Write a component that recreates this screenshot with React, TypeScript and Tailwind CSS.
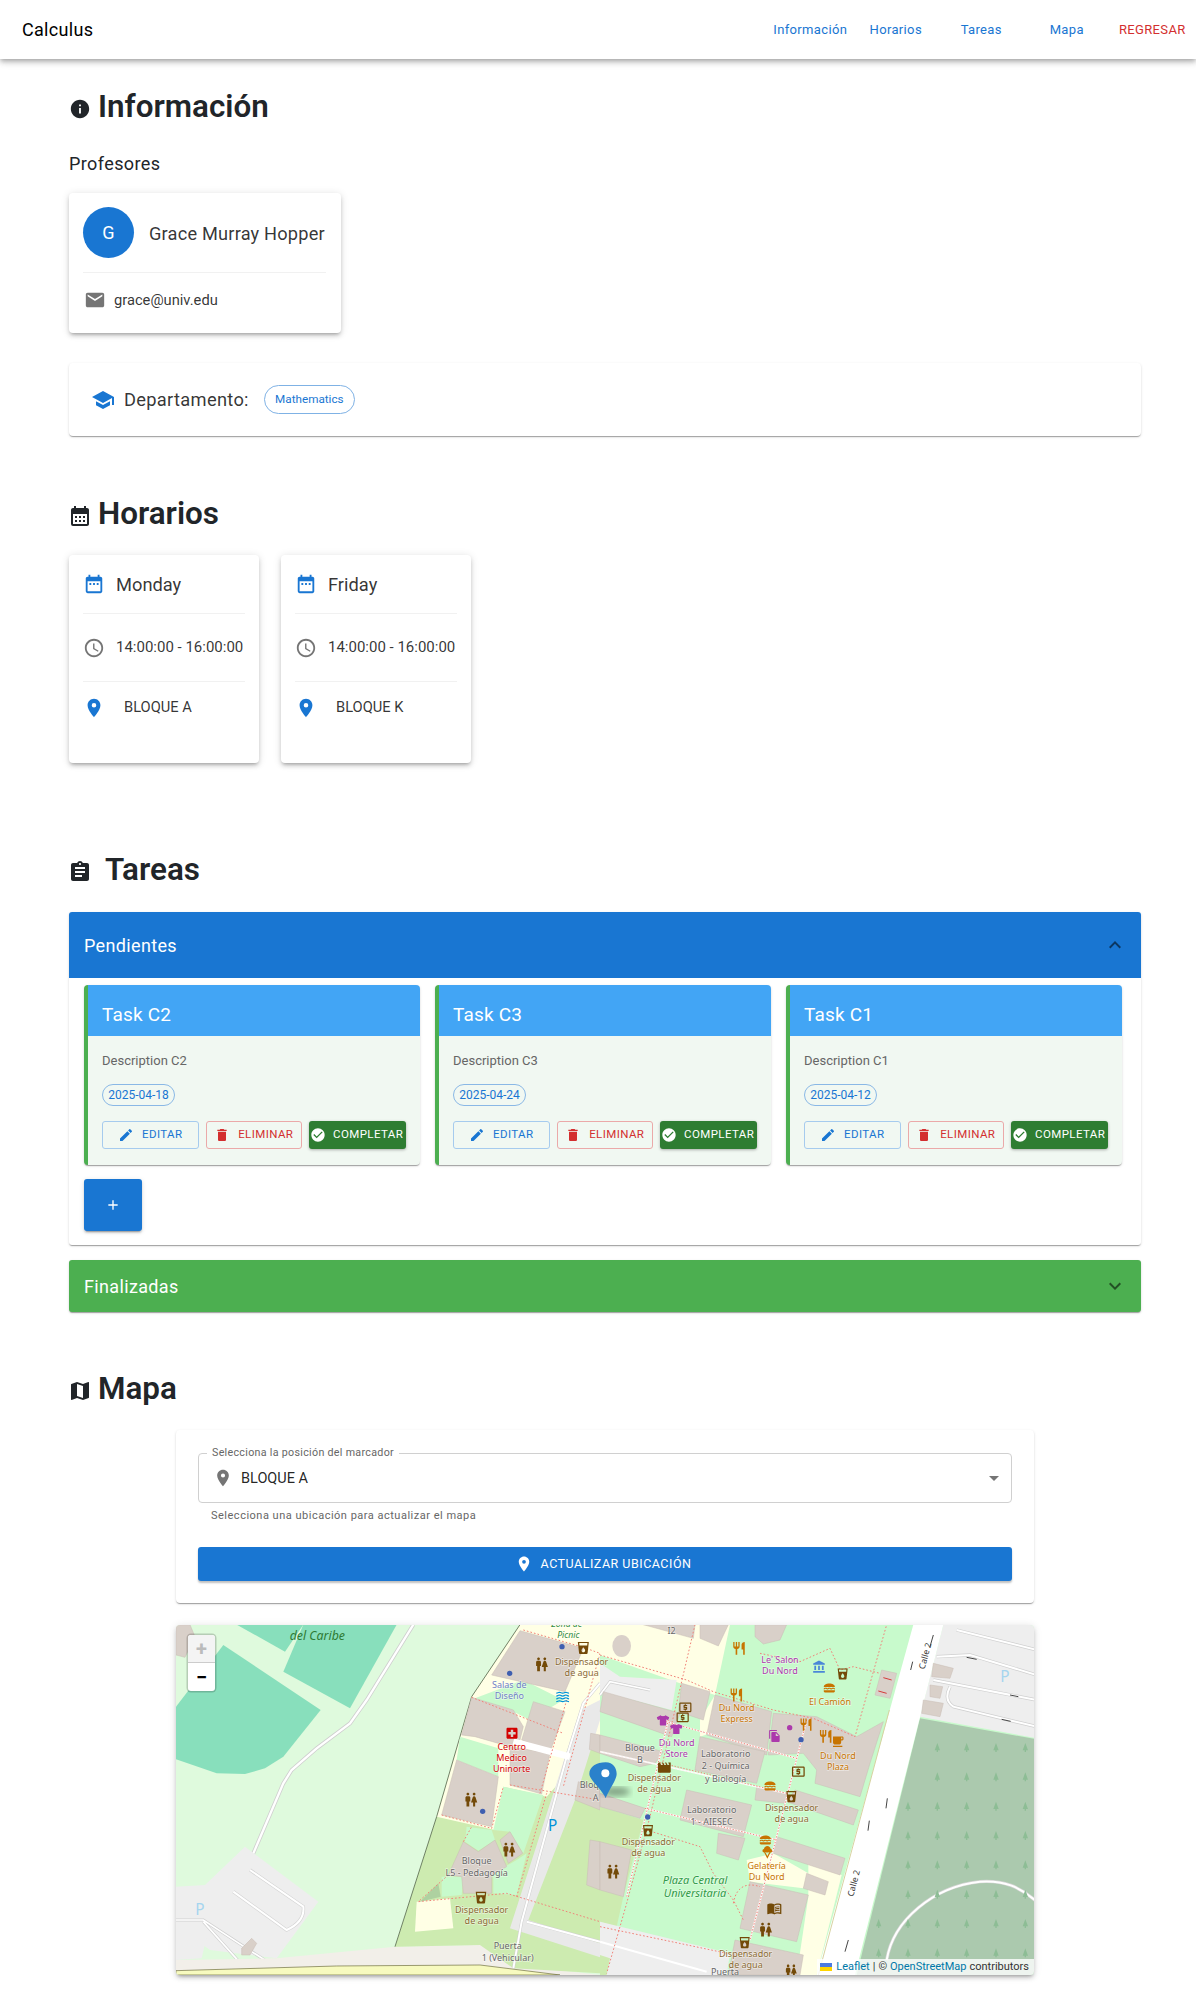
import type { ComponentType } from 'react';
import { FaTshirt } from 'react-icons/fa';
import {
  MdAccessTime,
  MdAccountBalance,
  MdAdd,
  MdArrowDropDown,
  MdAssignment,
  MdCalendarMonth,
  MdCheckCircle,
  MdDateRange,
  MdDelete,
  MdEdit,
  MdEmail,
  MdExpandLess,
  MdExpandMore,
  MdFileCopy,
  MdIcecream,
  MdInfo,
  MdLocalAtm,
  MdLocalCafe,
  MdLocalDrink,
  MdLocalHospital,
  MdLocationOn,
  MdLunchDining,
  MdMap,
  MdMenuBook,
  MdMovie,
  MdRestaurant,
  MdSchool,
  MdWaves,
  MdWc,
} from 'react-icons/md';

const tasks = [
  { title: 'Task C2', description: 'Description C2', date: '2025-04-18' },
  { title: 'Task C3', description: 'Description C3', date: '2025-04-24' },
  { title: 'Task C1', description: 'Description C1', date: '2025-04-12' },
];

const schedule = [
  { day: 'Monday', time: '14:00:00 - 16:00:00', room: 'BLOQUE A' },
  { day: 'Friday', time: '14:00:00 - 16:00:00', room: 'BLOQUE K' },
];

const navLinks = ['Información', 'Horarios', 'Tareas', 'Mapa'];

function SectionTitle({ icon: Icon, title, gap, size = 24 }: { icon: ComponentType<{ size?: number }>; title: string; gap: string; size?: number }) {
  return (
    <h2 className={`-ml-px flex h-10 items-center text-[31.4px] font-semibold text-[#212529] ${gap}`}>
      <span className="mt-[3px] flex w-6 justify-center">
        <Icon size={size} />
      </span>
      <span>{title}</span>
    </h2>
  );
}

// map art: every group is drawn in the pixels of a 3x crop, so points can be read straight off it
const buildingsLeft = [
  '18,14 60,14 75,50 45,112 18,105',
  '1050,32 1240,85 1185,215 965,165',
  '905,232 1030,270 1060,320 1050,360 1020,380 915,350 875,345',
  '1090,245 1185,275 1140,395 1055,360',
  '860,420 985,470 965,620 815,585',
  '1020,380 1140,400 1115,522 1020,495',
  '1020,635 1058,700 1015,730 990,660',
  '880,665 925,695 975,660 1010,740 965,765 965,820 880,820 875,770 835,765',
  '1262,340 1290,345 1290,400 1258,388',
  '1225,485 1290,510 1290,570 1215,540',
  '1260,660 1290,665 1290,810 1250,795',
  '215,985 245,955 260,970 240,1005 215,1005',
];

const buildingsRight = [
  '130,14 285,14 280,55',
  '300,14 385,14 355,78 300,55',
  '465,14 560,14 540,60 490,72 465,50',
  '10,215 240,280 215,350 0,275',
  '245,190 330,215 310,300 235,275',
  '345,225 515,275 500,405 320,345',
  '520,280 650,290 770,350 850,305 810,430 780,530 645,490 650,450 610,400 505,405',
  '300,350 495,395 470,490 285,450',
  '0,345 190,395 165,430 120,440 0,400',
  '0,520 135,565 120,595 0,560',
  '470,500 560,520 555,550 465,540',
  '585,510 775,570 760,615 560,545',
  '260,510 455,555 430,650 240,600',
  '355,640 435,655 415,720 350,700',
  '530,650 735,715 720,765 520,700',
  '450,785 625,825 590,965 420,925',
  '620,760 685,785 675,825 610,805',
  '405,960 610,1005 600,1065 385,1065',
  '0,665 95,690 70,830 0,810',
];

const buildingsRoadside = [
  '1000,130 1060,145 1050,175 995,170',
  '990,195 1028,200 1020,235 990,230',
  '970,240 1030,250 1020,290 965,280',
  '845,150 890,160 870,235 825,225',
];

const grassLeft = [
  '915,235 1060,180 1180,240 1080,300 1040,280',
  '870,350 985,385 985,470 860,420',
  '1000,500 1120,525 1060,700 1020,635 970,630',
  '890,620 965,630 975,660 925,692 885,665',
  '815,770 880,770 875,825 815,830',
  '970,760 1040,720 1070,700 1040,825 970,820',
];

const yellowRight = [
  '0,14 390,14 345,225 240,190 0,105',
  '625,720 725,765 650,1065 590,1065 625,830',
  '440,720 520,700 625,760 610,805 450,785',
  '520,370 590,375 585,395 520,385',
  '300,300 345,225 330,340 300,350',
];

const footways = [
  'M1060,30 L1240,82 L1290,100',
  'M905,232 L1180,340 M1190,240 L1110,520',
  'M815,585 L965,625 L1000,500 M1020,495 L1290,540',
  'M880,665 L905,620 M835,765 L745,845 L1010,820 L1290,905',
  'M1040,830 L1130,520 M1290,100 L1180,500',
];

const footwaysRight = [
  'M0,105 L260,180 L340,215 L520,270 L640,295 L765,350 L860,14',
  'M480,100 L600,125 L690,85 L720,150 L760,140 L840,160',
  'M285,14 L150,590 L80,850 L20,1060',
  'M0,395 L560,520 M135,565 L530,660',
  'M140,630 L300,680 L340,760 L400,840 L430,900',
  'M620,300 L450,960',
  'M400,850 C410,790 450,790 480,800',
  'M0,920 L405,1005',
  'M180,300 L590,415',
];

const labelsLeft = [
  { t: 'Zona de', x: 1190, y: 22, c: '#2f8a3a', s: 26 },
  { t: 'Picnic', x: 1195, y: 54, c: '#2f8a3a', s: 26 },
  { t: 'Dispensador', x: 1235, y: 134, c: '#8a6a30' },
  { t: 'de agua', x: 1235, y: 167, c: '#8a6a30' },
  { t: 'Salas de', x: 1018, y: 204, c: '#6f80c4' },
  { t: 'Diseño', x: 1018, y: 237, c: '#6f80c4' },
  { t: 'Centro', x: 1025, y: 391, c: '#d40000' },
  { t: 'Medico', x: 1025, y: 424, c: '#d40000' },
  { t: 'Uninorte', x: 1025, y: 457, c: '#d40000' },
  { t: 'Bloq', x: 1258, y: 505, c: '#666666' },
  { t: 'A', x: 1277, y: 542, c: '#666666' },
  { t: 'Bloque', x: 920, y: 733, c: '#666666' },
  { t: 'L5 - Pedagogía', x: 920, y: 768, c: '#666666' },
  { t: 'Dispensador', x: 935, y: 880, c: '#8a6a30' },
  { t: 'de agua', x: 935, y: 913, c: '#8a6a30' },
  { t: 'Puerta', x: 1013, y: 988, c: '#666666' },
  { t: '1 (Vehicular)', x: 1013, y: 1024, c: '#666666' },
];

const labelsRight = [
  { t: 'I2', x: 215, y: 42, c: '#666666' },
  { t: 'Le\' Salon', x: 540, y: 128, c: '#ac39ac' },
  { t: 'Du Nord', x: 540, y: 161, c: '#ac39ac' },
  { t: 'El Camión', x: 690, y: 254, c: '#c77400' },
  { t: 'Du Nord', x: 410, y: 274, c: '#c77400' },
  { t: 'Express', x: 410, y: 307, c: '#c77400' },
  { t: 'Du Nord', x: 714, y: 416, c: '#c77400' },
  { t: 'Plaza', x: 714, y: 449, c: '#c77400' },
  { t: 'Bloque', x: 120, y: 393, c: '#666666' },
  { t: 'B', x: 120, y: 430, c: '#666666' },
  { t: 'Du Nord', x: 230, y: 378, c: '#ac39ac' },
  { t: 'Store', x: 230, y: 412, c: '#ac39ac' },
  { t: 'Laboratorio', x: 377, y: 412, c: '#666666' },
  { t: '2 - Química', x: 377, y: 448, c: '#666666' },
  { t: 'y Biología', x: 377, y: 485, c: '#666666' },
  { t: 'Dispensador', x: 163, y: 482, c: '#8a6a30' },
  { t: 'de agua', x: 163, y: 515, c: '#8a6a30' },
  { t: 'Dispensador', x: 575, y: 573, c: '#8a6a30' },
  { t: 'de agua', x: 575, y: 606, c: '#8a6a30' },
  { t: 'Laboratorio', x: 335, y: 580, c: '#666666' },
  { t: '1 - AIESEC', x: 335, y: 616, c: '#666666' },
  { t: 'Dispensador', x: 145, y: 675, c: '#8a6a30' },
  { t: 'de agua', x: 145, y: 708, c: '#8a6a30' },
  { t: 'Gelatería', x: 500, y: 746, c: '#c77400' },
  { t: 'Du Nord', x: 500, y: 779, c: '#c77400' },
  { t: 'Plaza Central', x: 285, y: 791, c: '#2f9a45', i: true },
  { t: 'Universitaria', x: 285, y: 831, c: '#2f9a45', i: true },
  { t: 'Dispensador', x: 437, y: 1012, c: '#8a6a30' },
  { t: 'de agua', x: 437, y: 1045, c: '#8a6a30' },
  { t: 'Puerta', x: 375, y: 1065, c: '#666666' },
];

type Glyph = [ComponentType<{ x?: number; y?: number; size?: number; color?: string }>, number, number, number, string];

const glyphsLeft: Glyph[] = [
  [MdWc, 1090, 108, 50, '#734a08'],
  [MdLocalDrink, 1218, 62, 44, '#734a08'],
  [MdWaves, 1155, 208, 46, '#0092da'],
  [MdLocalHospital, 1004, 318, 44, '#d40000'],
  [MdWc, 878, 514, 50, '#734a08'],
  [MdWc, 992, 664, 50, '#734a08'],
  [MdLocalDrink, 912, 812, 42, '#734a08'],
];

const glyphsRight: Glyph[] = [
  [MdRestaurant, 394, 62, 46, '#c77400'],
  [MdRestaurant, 386, 202, 46, '#c77400'],
  [MdRestaurant, 596, 292, 44, '#c77400'],
  [MdRestaurant, 654, 326, 46, '#c77400'],
  [MdLocalCafe, 692, 344, 42, '#c77400'],
  [MdLunchDining, 668, 184, 40, '#c77400'],
  [MdLunchDining, 490, 478, 40, '#c77400'],
  [MdLunchDining, 476, 640, 40, '#c77400'],
  [MdAccountBalance, 636, 120, 42, '#4a86d8'],
  [MdLocalDrink, 708, 142, 40, '#734a08'],
  [MdLocalDrink, 554, 510, 40, '#734a08'],
  [MdLocalDrink, 124, 612, 40, '#734a08'],
  [MdLocalDrink, 414, 948, 40, '#734a08'],
  [MdLocalAtm, 234, 240, 44, '#734a08'],
  [MdLocalAtm, 226, 270, 44, '#734a08'],
  [MdLocalAtm, 572, 432, 46, '#734a08'],
  [MdFileCopy, 504, 328, 40, '#ac39ac'],
  [MdMovie, 170, 420, 46, '#734a08'],
  [MdIcecream, 480, 674, 44, '#c77400'],
  [MdMenuBook, 500, 842, 46, '#734a08'],
  [MdWc, 14, 730, 50, '#734a08'],
  [MdWc, 472, 904, 50, '#734a08'],
  [MdWc, 550, 1030, 46, '#734a08'],
];

const shirts = [
  [170, 282],
  [210, 308],
];

const trees: number[][] = [];
for (let col = 0; col < 6; col++) {
  for (let row = 0; row < 8; row++) {
    const x = 836 + col * 88;
    const y = 385 + row * 88 - 2;
    // keep only what stands on the wooded side of the road
    if (x > 960 - (y - 300) * 0.27 + 30) trees.push([x, y]);
  }
}

function MapLabel({ t, x, y, c, i, s }: { t: string; x: number; y: number; c: string; i?: boolean; s?: number }) {
  return (
    <text
      x={x}
      y={y}
      fill={c}
      fontSize={s ?? (i ? 33 : 27)}
      fontStyle={i || s ? 'italic' : 'normal'}
      fontFamily="'Noto Sans', sans-serif"
      textAnchor="middle"
      stroke="#ffffff"
      strokeOpacity={0.5}
      strokeWidth={4}
      paintOrder="stroke"
    >
      {t}
    </text>
  );
}

function MapArt() {
  return (
    <svg viewBox="176 1625 858 350" className="block h-[350px] w-[858px]">
      <defs>
        <filter id="marker-shadow">
          <feGaussianBlur stdDeviation="9" />
        </filter>
      </defs>

      <g transform="translate(170 1620) scale(0.33333)">
        <rect x="0" y="0" width="1290" height="1100" fill="#dffadd" />
        <g fill="#88dfbc">
          <polygon points="200,14 345,95 400,14" />
          <polygon points="400,14 680,14 540,265 340,155" />
          <polygon points="18,260 160,75 452,270 380,360 340,410 285,445 225,462 140,460 18,418" />
        </g>
        <polyline points="730,14 590,240 540,310 440,385 365,450 340,490 235,735 190,800 120,890" fill="none" stroke="#cfcfcf" strokeWidth="12" />
        <polyline points="730,14 590,240 540,310 440,385 365,450 340,490 235,735 190,800 120,890" fill="none" stroke="#ffffff" strokeWidth="7" />
        <polygon points="18,800 105,795 225,680 445,845 320,1015 120,990 18,915" fill="#eeeeee" />
        <path d="M240,750 L400,860 Q405,905 350,930 L190,815" fill="none" stroke="#d4d4d4" strokeWidth="10" />
        <path d="M240,750 L400,860 Q405,905 350,930 L190,815" fill="none" stroke="#ffffff" strokeWidth="6" />
        <polygon points="18,915 118,915 95,1015 18,1020" fill="#eeeeee" />
        <path d="M18,900 L100,900 L230,985 L330,1050 M100,905 L225,1045" fill="none" stroke="#cfcfcf" strokeWidth="9" />
        <path d="M18,900 L100,900 L230,985 L330,1050 M100,905 L225,1045" fill="none" stroke="#ffffff" strokeWidth="5" />
        <polygon points="18,1020 320,1015 675,980 930,975 1080,1040 1290,1065 18,1065" fill="#f2efe9" />
        <polygon points="1050,14 905,230 800,590 675,980 930,975 1030,1045 1290,1060 1290,14" fill="#cdebb0" />
        <polygon points="1050,14 1290,14 1290,350 1130,530 1000,500 975,630 800,590 905,230" fill="#ffffe5" />
        <polygon points="740,845 840,835 850,925 735,935" fill="#ffffe5" />
        <polygon points="750,845 805,790 812,830" fill="#aed1a0" />
        <polyline points="1050,14 905,230 800,590 675,980" fill="none" stroke="#5a6a50" strokeWidth="2.5" />
        <g fill="#c8facc">
          {grassLeft.map((p) => (
            <polygon key={p} points={p} />
          ))}
        </g>
        <polygon points="1230,270 1290,240 1290,300 1215,540 1075,900 1290,970 1290,1012 1020,925" fill="#e9e9e9" />
        <g fill="#d9d0c9" stroke="#c9bdb4" strokeWidth="1.5">
          {buildingsLeft.map((p) => (
            <polygon key={p} points={p} />
          ))}
        </g>
        <path d="M1290,190 L1240,250 L1190,410 L1055,905 L1030,1045 M1070,905 L1290,965" fill="none" stroke="#cfcfcf" strokeWidth="9" />
        <path d="M1290,190 L1240,250 L1190,410 L1055,905 L1030,1045 M1070,905 L1290,965" fill="none" stroke="#ffffff" strokeWidth="6" />
        <path d="M1030,365 L1200,410" fill="none" stroke="#ffffff" strokeWidth="20" />
        <g fill="none" stroke="#f08378" strokeWidth="3" strokeDasharray="5 6">
          {footways.map((d) => (
            <path key={d} d={d} />
          ))}
        </g>
        <polygon points="18,1052 500,1038 930,1035 1170,1065 18,1065" fill="#f7fabf" stroke="#6b6b3a" strokeWidth="2" />
        <g fill="#3f5fb0">
          <circle cx="1176" cy="80" r="8" />
          <circle cx="1019" cy="160" r="8" />
          <circle cx="938" cy="574" r="8" />
        </g>
      </g>

      <g transform="translate(600 1620) scale(0.33333)">
        <rect x="0" y="0" width="1310" height="1100" fill="#c8facc" />
        <g fill="#ffffe5">
          {yellowRight.map((p) => (
            <polygon key={p} points={p} />
          ))}
        </g>
        <polygon points="0,130 60,170 230,180 215,270 0,215" fill="#eeeeee" />
        <path d="M0,225 L30,185 L150,210" fill="none" stroke="#d0d0d0" strokeWidth="9" />
        <path d="M0,225 L30,185 L150,210" fill="none" stroke="#ffffff" strokeWidth="5" />
        <polygon points="0,560 130,600 70,830 0,810" fill="#cdebb0" />
        <polygon points="0,810 70,830 50,920 0,905" fill="#cdebb0" />
        <polygon points="0,905 390,1000 380,1065 0,1065" fill="#eeeeee" />
        <polygon points="0,1005 30,1015 20,1065 0,1065" fill="#cdebb0" />
        <path d="M0,965 L320,1055" fill="none" stroke="#ffffff" strokeWidth="6" />
        <ellipse cx="65" cy="78" rx="28" ry="33" fill="#d9d0c9" />
        <g fill="#d9d0c9" stroke="#c9bdb4" strokeWidth="1.5">
          {buildingsRight.map((p) => (
            <polygon key={p} points={p} />
          ))}
        </g>
        <g fill="none" stroke="#f08378" strokeWidth="3" strokeDasharray="5 6">
          {footwaysRight.map((d) => (
            <path key={d} d={d} />
          ))}
        </g>
        <g fill="none" stroke="#ffffff" strokeWidth="5" opacity="0.9">
          <path d="M180,300 L590,415 M0,395 L560,520 M135,565 L530,660 M620,300 L450,960 M205,300 L80,830" />
        </g>
        <g fill="none" stroke="#f08378" strokeWidth="3" strokeDasharray="4 5">
          <path d="M180,300 L590,415 M180,428 L560,520 M135,565 L530,660 M620,300 L450,960 M205,300 L80,830" />
        </g>

        <polygon points="1030,14 1310,14 1310,355 960,290" fill="#eeeeee" />
        <polygon points="960,295 1310,358 1310,1065 770,1065" fill="#abc9ae" />
        <polygon points="940,14 1030,14 765,1065 650,1065" fill="#ffffff" />
        <line x1="868" y1="270" x2="655" y2="1065" stroke="#d7d2a0" strokeWidth="3" />
        <g fill="#d9d0c9" stroke="#c9bdb4" strokeWidth="1.5">
          {buildingsRoadside.map((p) => (
            <polygon key={p} points={p} />
          ))}
        </g>
        <path d="M1010,110 L1110,105 L1310,165 M1000,180 L1310,240 M1050,200 Q1030,240 1060,260 L1310,320 M1070,30 L1310,90" fill="none" stroke="#cfcfcf" strokeWidth="10" />
        <path d="M1010,110 L1110,105 L1310,165 M1000,180 L1310,240 M1050,200 Q1030,240 1060,260 L1310,320 M1070,30 L1310,90" fill="none" stroke="#ffffff" strokeWidth="6" />
        <path d="M860,1020 C880,900 1000,800 1140,785 C1210,780 1260,800 1310,845" fill="none" stroke="#d4d4d4" strokeWidth="10" />
        <path d="M860,1020 C880,900 1000,800 1140,785 C1210,780 1260,800 1310,845" fill="none" stroke="#ffffff" strokeWidth="6" />
        <g fill="#8dbd95">
          {trees.map(([x, y]) => (
            <path key={`${x}-${y}`} d={`M${x},${y - 14} L${x + 8},${y + 8} L${x + 2},${y + 8} L${x + 2},${y + 13} L${x - 2},${y + 13} L${x - 2},${y + 8} L${x - 8},${y + 8} Z`} />
          ))}
        </g>
        <path d="M850,173 L875,180 M835,213 L860,220" stroke="#d43a3a" strokeWidth="3" />
        <path d="M1000,45 L990,80 M1100,112 L1130,118 M1230,225 L1255,230 M1205,298 L1232,304 M862,535 L858,565 M808,602 L804,632 M745,960 L735,995 M938,125 L932,150" stroke="#444444" strokeWidth="3" />
        <g fill="#3f5fb0">
          <circle cx="603" cy="359" r="8" />
          <circle cx="143" cy="591" r="8" />
        </g>
        <circle cx="569" cy="323" r="8" fill="#ac39ac" />
      </g>

      <g transform="translate(170 1620) scale(0.33333)">
        {labelsLeft.map((l) => (
          <MapLabel key={`${l.t}-${l.x}-${l.y}`} {...l} />
        ))}
        <text x="442" y="60" fill="#2e7a33" fontSize="37" fontStyle="italic" fontFamily="'Noto Sans', sans-serif" textAnchor="middle">
          del Caribe
        </text>
        <text x="1148" y="632" fill="#0092da" fontSize="46" fontFamily="'Noto Sans', sans-serif" textAnchor="middle">
          P
        </text>
        <text x="90" y="886" fill="#a5d5ee" fontSize="46" fontFamily="'Noto Sans', sans-serif" textAnchor="middle">
          P
        </text>
        {glyphsLeft.map(([Icon, x, y, size, color]) => (
          <Icon key={`${x}-${y}`} x={x} y={y} size={size} color={color} />
        ))}
      </g>

      <g transform="translate(600 1620) scale(0.33333)">
        {labelsRight.map((l) => (
          <MapLabel key={`${l.t}-${l.x}-${l.y}`} {...l} />
        ))}
        <text x="1215" y="186" fill="#a5d5ee" fontSize="46" fontFamily="'Noto Sans', sans-serif" textAnchor="middle">
          P
        </text>
        <text transform="translate(984 110) rotate(-75)" fill="#333333" fontSize="26" fontFamily="'Noto Sans', sans-serif" textAnchor="middle">
          Calle 2
        </text>
        <text transform="translate(770 792) rotate(-75)" fill="#333333" fontSize="26" fontFamily="'Noto Sans', sans-serif" textAnchor="middle">
          Calle 2
        </text>
        {glyphsRight.map(([Icon, x, y, size, color]) => (
          <Icon key={`${x}-${y}`} x={x} y={y} size={size} color={color} />
        ))}
        {shirts.map(([x, y]) => (
          <FaTshirt key={x} x={x} y={y} size={38} color="#ac39ac" />
        ))}
        <ellipse cx="48" cy="515" rx="42" ry="14" fill="#000000" opacity="0.35" filter="url(#marker-shadow)" />
        <path d="M17,535 C8,510 -32,480 -32,462 C-32,440 -10,427 17,427 C40,427 50,445 50,462 C50,480 26,510 17,535 Z" fill="#2a81cb" />
        <circle cx="16" cy="460" r="12" fill="#ffffff" />
      </g>
    </svg>
  );
}

export default function App() {
  return (
    <div className="min-h-screen bg-white font-['Roboto',sans-serif] text-[rgba(0,0,0,0.87)]">
      <header className="flex h-[59px] items-center justify-between bg-white pl-[22px] pr-px shadow-[0_2px_4px_-1px_rgba(0,0,0,0.2),0_4px_5px_0_rgba(0,0,0,0.14),0_1px_10px_0_rgba(0,0,0,0.12)]">
        <span className="text-[18px] tracking-[0.3px] text-black">Calculus</span>
        <nav className="flex">
          {navLinks.map((link) => (
            <a key={link} className="w-[85.5px] text-center text-[13px] tracking-[0.35px] text-[#1976d2]">
              {link}
            </a>
          ))}
          <a className="w-[85.5px] text-center text-[13px] tracking-[0.35px] text-[#d32f2f]">REGRESAR</a>
        </nav>
      </header>

      <main className="pb-[26px] pl-[69px] pr-[55px] pt-[28px]">
        <SectionTitle icon={MdInfo} title="Información" gap="gap-[6px]" size={22} />
        <p className="mt-[25px] h-6 text-[18px] leading-6 tracking-[0.4px] text-[#212529]">Profesores</p>

        <div className="mt-[17px] h-[140px] w-[272px] rounded bg-white pl-[14px] pr-[15px] pt-[14px] shadow-[0_3px_3px_-2px_rgba(0,0,0,0.2),0_3px_4px_0_rgba(0,0,0,0.14),0_1px_8px_0_rgba(0,0,0,0.12)]">
          <div className="flex items-center gap-[15px] border-b border-[#f1f1f1] pb-[14px]">
            <div className="flex size-[51px] items-center justify-center rounded-full bg-[#1976d2] text-[18px] text-white">G</div>
            <span className="mt-[2px] whitespace-nowrap text-[18.2px] tracking-[0.2px] text-[rgba(0,0,0,0.8)]">Grace Murray Hopper</span>
          </div>
          <div className="mt-[16px] flex items-center gap-[8px] pl-px">
            <MdEmail size={22} className="text-[#757575]" />
            <span className="text-[14.7px] text-[rgba(0,0,0,0.8)]">grace@univ.edu</span>
          </div>
        </div>

        <div className="mt-[30px] flex h-[73px] items-center rounded bg-white pl-[22px] shadow-[0_2px_1px_-1px_rgba(0,0,0,0.2),0_1px_1px_0_rgba(0,0,0,0.14),0_1px_3px_0_rgba(0,0,0,0.12)]">
          <MdSchool size={24} className="text-[#1976d2]" />
          <span className="ml-[9px] text-[18.3px] tracking-[0.3px] text-[rgba(0,0,0,0.8)]">Departamento:</span>
          <span className="ml-[15px] flex h-[29px] w-[91px] items-center justify-center rounded-full border border-[#7fb2e5] text-[11.7px] text-[#1976d2]">Mathematics</span>
        </div>

        <div className="mt-[58px]">
          <SectionTitle icon={MdCalendarMonth} title="Horarios" gap="gap-[6px]" />
        </div>
        <div className="mt-[21px] flex gap-[22px]">
          {schedule.map((item) => (
            <div key={item.day} className="h-[208px] w-[190px] rounded bg-white px-[14px] shadow-[0_3px_3px_-2px_rgba(0,0,0,0.2),0_3px_4px_0_rgba(0,0,0,0.14),0_1px_8px_0_rgba(0,0,0,0.12)]">
              <div className="flex h-[59px] items-center gap-[11px] border-b border-[#f1f1f1]">
                <MdDateRange size={22} className="text-[#1976d2]" />
                <span className="mt-[2px] text-[18.3px] text-[rgba(0,0,0,0.8)]">{item.day}</span>
              </div>
              <div className="flex h-[68px] items-center gap-[11px] border-b border-[#f1f1f1]">
                <MdAccessTime size={22} className="shrink-0 text-[#757575]" />
                <span className="whitespace-nowrap text-[15px] text-[rgba(0,0,0,0.8)]">{item.time}</span>
              </div>
              <div className="flex h-[51px] items-center gap-[19px]">
                <MdLocationOn size={22} className="shrink-0 text-[#1976d2]" />
                <span className="text-[14.7px] text-[rgba(0,0,0,0.8)]">{item.room}</span>
              </div>
            </div>
          ))}
        </div>

        <div className="mt-[87px]">
          <SectionTitle icon={MdAssignment} title="Tareas" gap="gap-[13px]" />
        </div>

        <section className="mt-[22px] rounded-[3px] bg-white shadow-[0_2px_1px_-1px_rgba(0,0,0,0.2),0_1px_1px_0_rgba(0,0,0,0.14),0_1px_3px_0_rgba(0,0,0,0.12)]">
          <div className="flex h-[66px] items-center justify-between rounded-t-[3px] bg-[#1976d2] pl-[15px] pr-[14px]">
            <span className="text-[18px] tracking-[0.35px] text-white">Pendientes</span>
            <MdExpandLess size={24} className="text-[rgba(0,0,0,0.54)]" />
          </div>
          <div className="h-[267px] px-[15px] pt-[7px]">
            <div className="flex gap-[15px]">
              {tasks.map((task) => (
                <article key={task.title} className="h-[180px] w-[336px] overflow-hidden rounded border-l-4 border-[#4caf50] bg-[#f1f8f2] shadow-[0_2px_1px_-1px_rgba(0,0,0,0.2),0_1px_1px_0_rgba(0,0,0,0.14),0_1px_3px_0_rgba(0,0,0,0.12)]">
                  <div className="flex h-[51px] items-center bg-[#42a5f5] pl-[14px] pt-[9px] text-[19px] tracking-[0.2px] text-white">{task.title}</div>
                  <div className="pl-[14px] pt-[15px]">
                    <p className="h-5 text-[13px] leading-5 text-[#666666]">{task.description}</p>
                    <span className="mt-[13px] flex h-[22px] w-[73px] items-center justify-center rounded-full border border-[#8ab8e6] text-[12px] text-[#1976d2]">{task.date}</span>
                    <div className="mt-[15px] flex gap-[7px]">
                      <button className="flex h-[28px] w-[96.5px] items-center justify-center gap-[8px] rounded-[3px] border border-[#a6cbee] text-[11.5px] tracking-[0.4px] text-[#1976d2]">
                        <MdEdit size={16} />
                        EDITAR
                      </button>
                      <button className="flex h-[28px] w-[96.5px] items-center justify-center gap-[8px] rounded-[3px] border border-[#eba9a9] text-[11.5px] tracking-[0.4px] text-[#d32f2f]">
                        <MdDelete size={16} />
                        ELIMINAR
                      </button>
                      <button className="flex h-[28px] w-[96.5px] items-center gap-[7px] whitespace-nowrap rounded-[3px] bg-[#2e7d32] pl-[1px] text-[11.5px] tracking-[0.4px] text-white shadow-[0_1px_3px_rgba(0,0,0,0.3)]">
                        <MdCheckCircle size={16} />
                        COMPLETAR
                      </button>
                    </div>
                  </div>
                </article>
              ))}
            </div>
            <button className="mt-[14px] flex h-[52px] w-[58px] items-center justify-center rounded-[3px] bg-[#1976d2] text-white shadow-[0_3px_1px_-2px_rgba(0,0,0,0.2),0_2px_2px_0_rgba(0,0,0,0.14),0_1px_5px_0_rgba(0,0,0,0.12)]">
              <MdAdd size={16} />
            </button>
          </div>
        </section>

        <section className="mt-[15px] flex h-[52px] items-center justify-between rounded-[3px] bg-[#4caf50] pl-[15px] pr-[14px] shadow-[0_2px_1px_-1px_rgba(0,0,0,0.2),0_1px_1px_0_rgba(0,0,0,0.14),0_1px_3px_0_rgba(0,0,0,0.12)]">
          <span className="text-[18px] tracking-[0.35px] text-white">Finalizadas</span>
          <MdExpandMore size={24} className="text-[rgba(0,0,0,0.54)]" />
        </section>

        <div className="mt-[57px]">
          <SectionTitle icon={MdMap} title="Mapa" gap="gap-[6px]" />
        </div>

        <div className="ml-[107px] mt-[21px] h-[173px] w-[858px] rounded bg-white px-[22px] pt-[23px] shadow-[0_2px_1px_-1px_rgba(0,0,0,0.2),0_1px_1px_0_rgba(0,0,0,0.14),0_1px_3px_0_rgba(0,0,0,0.12)]">
          <div className="relative flex h-[50px] items-center rounded border border-[#d0d0d0] pl-[14px] pr-[5px]">
            <span className="absolute -top-[8px] left-[8px] bg-white px-[5px] text-[10.7px] leading-[14px] tracking-[0.3px] text-[#666666]">Selecciona la posición del marcador</span>
            <MdLocationOn size={20} className="text-[#757575]" />
            <span className="ml-[8px] mt-[2px] text-[14.5px] text-[rgba(0,0,0,0.87)]">BLOQUE A</span>
            <MdArrowDropDown size={24} className="ml-auto text-[#757575]" />
          </div>
          <p className="ml-[13px] mt-[6px] text-[11px] leading-[14px] tracking-[0.5px] text-[#666666]">Selecciona una ubicación para actualizar el mapa</p>
          <button className="mt-[24px] flex h-[34px] w-full items-center justify-center gap-[8px] rounded-[3px] bg-[#1976d2] pr-[4px] text-[12.5px] tracking-[0.5px] text-white shadow-[0_2px_2px_rgba(0,0,0,0.25)]">
            <MdLocationOn size={18} />
            ACTUALIZAR UBICACIÓN
          </button>
        </div>

        <div className="relative ml-[107px] mt-[22px] h-[350px] w-[858px] overflow-hidden rounded shadow-[0_3px_3px_-2px_rgba(0,0,0,0.2),0_3px_4px_0_rgba(0,0,0,0.14),0_1px_8px_0_rgba(0,0,0,0.12)]">
          <MapArt />
          <div className="absolute left-[12px] top-[10px] w-[27px] rounded-[3px] bg-white shadow-[0_0_0_1.5px_rgba(0,0,0,0.18)]">
            <div className="flex h-[28px] items-center justify-center rounded-t-[3px] border-b border-[#cccccc] bg-[#f4f4f4] text-[20px] font-bold leading-none text-[#bbbbbb]">+</div>
            <div className="flex h-[28px] items-center justify-center text-[20px] font-bold leading-none text-black">−</div>
          </div>
          <div className="absolute bottom-0 right-0 flex h-[16px] items-center gap-[3px] bg-white/80 pl-[3px] pr-[5px] text-[11px] text-[#333333]">
            <svg width="12" height="8" viewBox="0 0 12 8" className="mr-[1px]">
              <rect width="12" height="4" fill="#4c7be1" />
              <rect y="4" width="12" height="4" fill="#ffd500" />
            </svg>
            <span className="text-[#0078a8]">Leaflet</span>
            <span>|</span>
            <span>©</span>
            <span className="text-[#0078a8]">OpenStreetMap</span>
            <span>contributors</span>
          </div>
        </div>
      </main>
    </div>
  );
}
